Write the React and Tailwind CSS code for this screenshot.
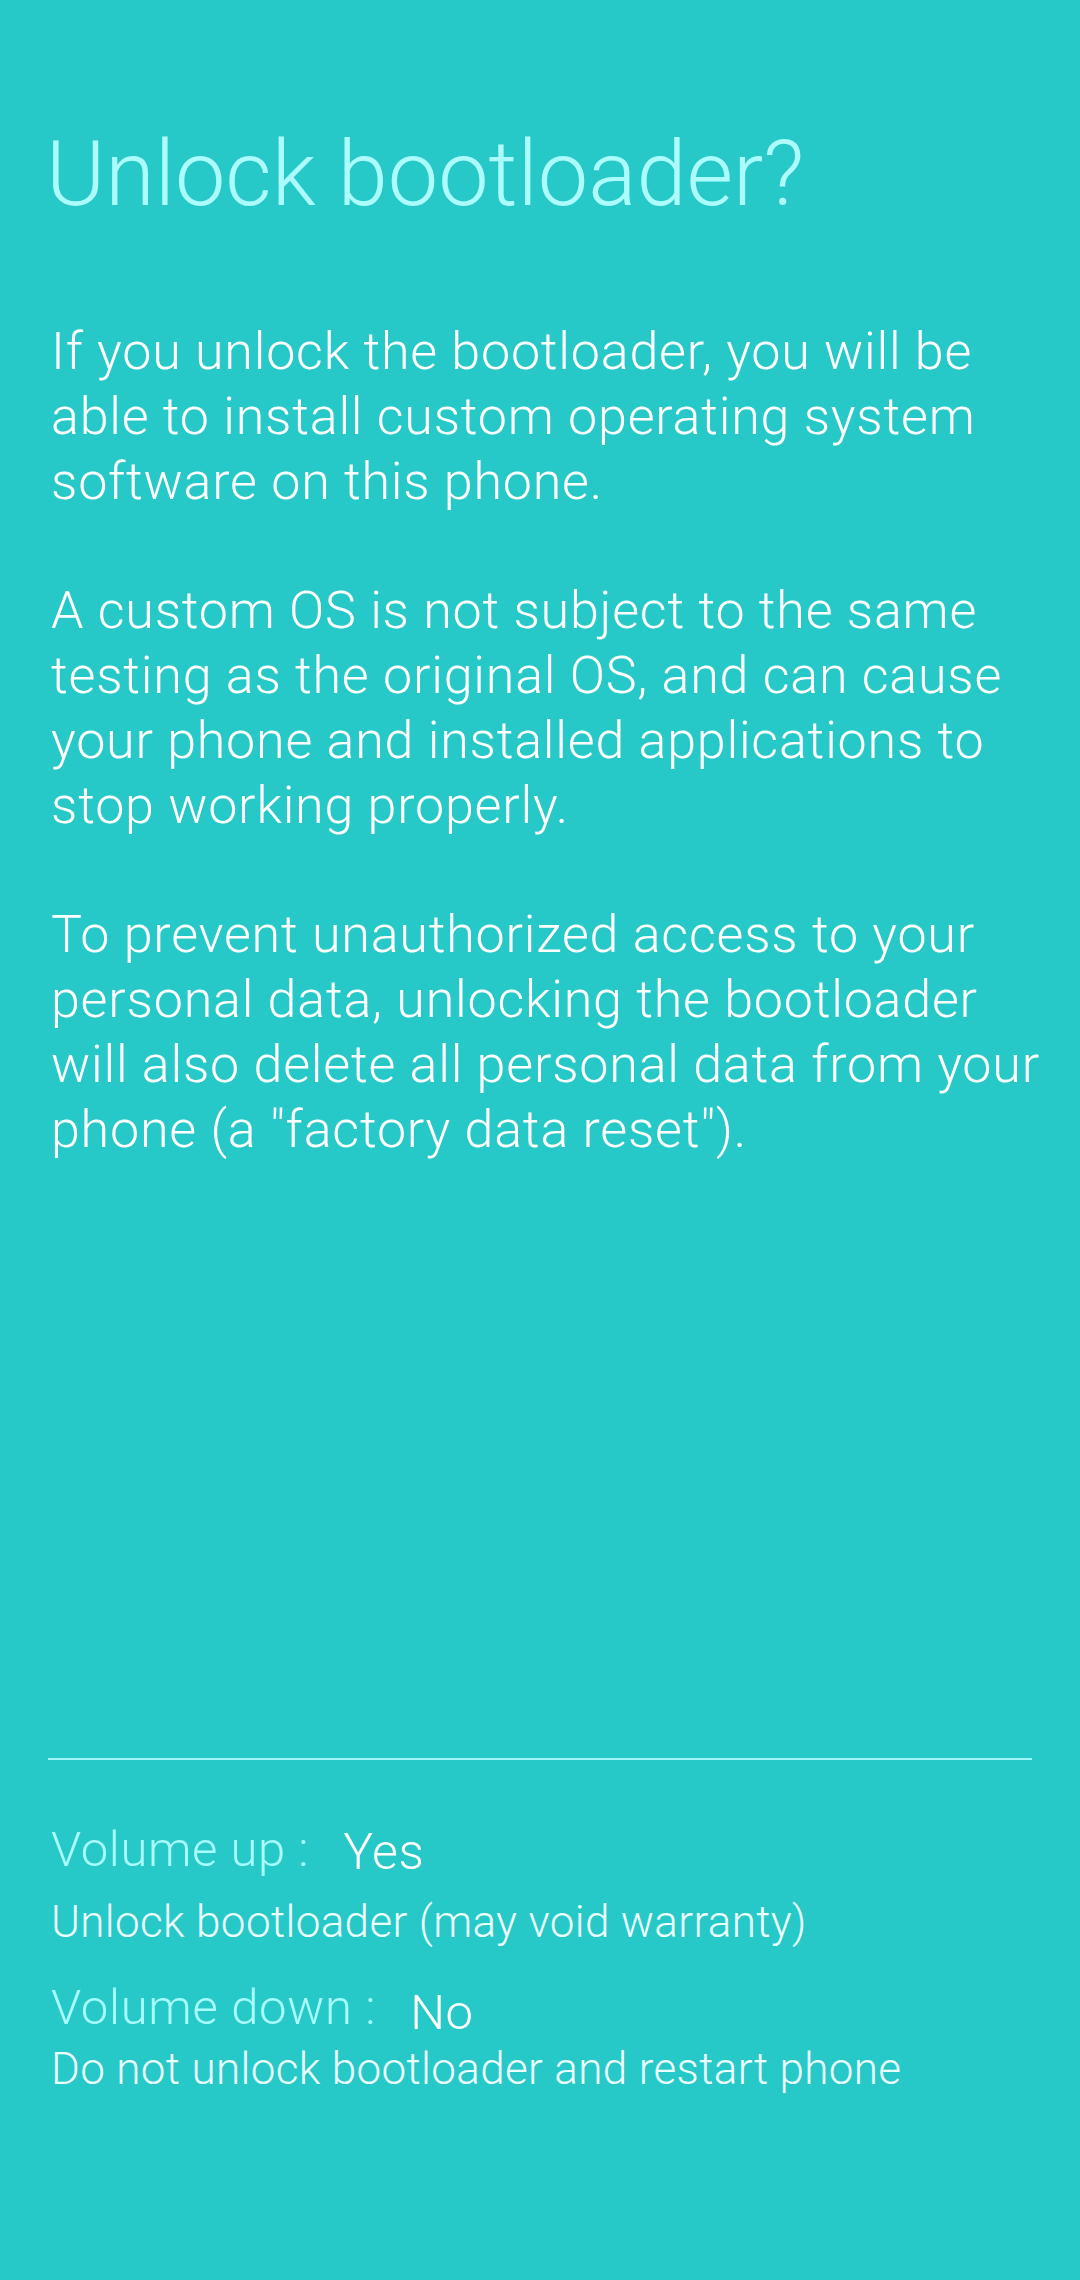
export default function App() {
  return (
    <div
      className="flex h-[2280px] w-[1080px] flex-col bg-[#26c8c8] font-light"
      style={{ fontFamily: "Roboto, 'Noto Sans', sans-serif" }}
    >
      <h1 className="ml-[46px] mt-[130px] text-[90px] font-light leading-[90px] text-[#adfcfc]">
        Unlock bootloader?
      </h1>

      <div className="mt-[100px] pl-[51px] pr-[32px] text-[52px] font-light leading-[64.8px] tracking-[0.78px] text-white">
        <p className="mb-[64.8px]">
          If you unlock the bootloader, you will be able to install custom operating system software on this phone.
        </p>
        <p className="mb-[64.8px]">
          A custom OS is not subject to the same testing as the original OS, and can cause your phone and installed applications to stop working properly.
        </p>
        <p>
          To prevent unauthorized access to your personal data, unlocking the bootloader will also delete all personal data from your phone (a "factory data reset").
        </p>
      </div>

      <div className="mt-auto px-[48px] pb-[183px]">
        <div className="h-[2px] w-full bg-[#9ff6f6]" />

        <div className="mt-[59px] flex items-baseline pl-[3px] leading-[60px]">
          <span className="text-[49px] tracking-[0.6px] text-[#a8fcfc]">Volume up :</span>
          <span className="relative top-[3px] ml-[34px] text-[50px] tracking-[0.5px] text-white">Yes</span>
        </div>
        <div className="mt-[14px] pl-[3px] text-[44px] leading-[56px] tracking-[0.35px] text-[#ecffff]">
          Unlock bootloader (may void warranty)
        </div>

        <div className="mt-[28px] flex items-baseline pl-[3px] leading-[60px]">
          <span className="text-[49px] tracking-[0.7px] text-[#a8fcfc]">Volume down :</span>
          <span className="relative top-[5px] ml-[34px] text-[49px] tracking-[0.5px] text-white">No</span>
        </div>
        <div className="mt-[3px] pl-[3px] text-[44px] leading-[56px] tracking-[0.35px] text-[#ecffff]">
          Do not unlock bootloader and restart phone
        </div>
      </div>
    </div>
  );
}
